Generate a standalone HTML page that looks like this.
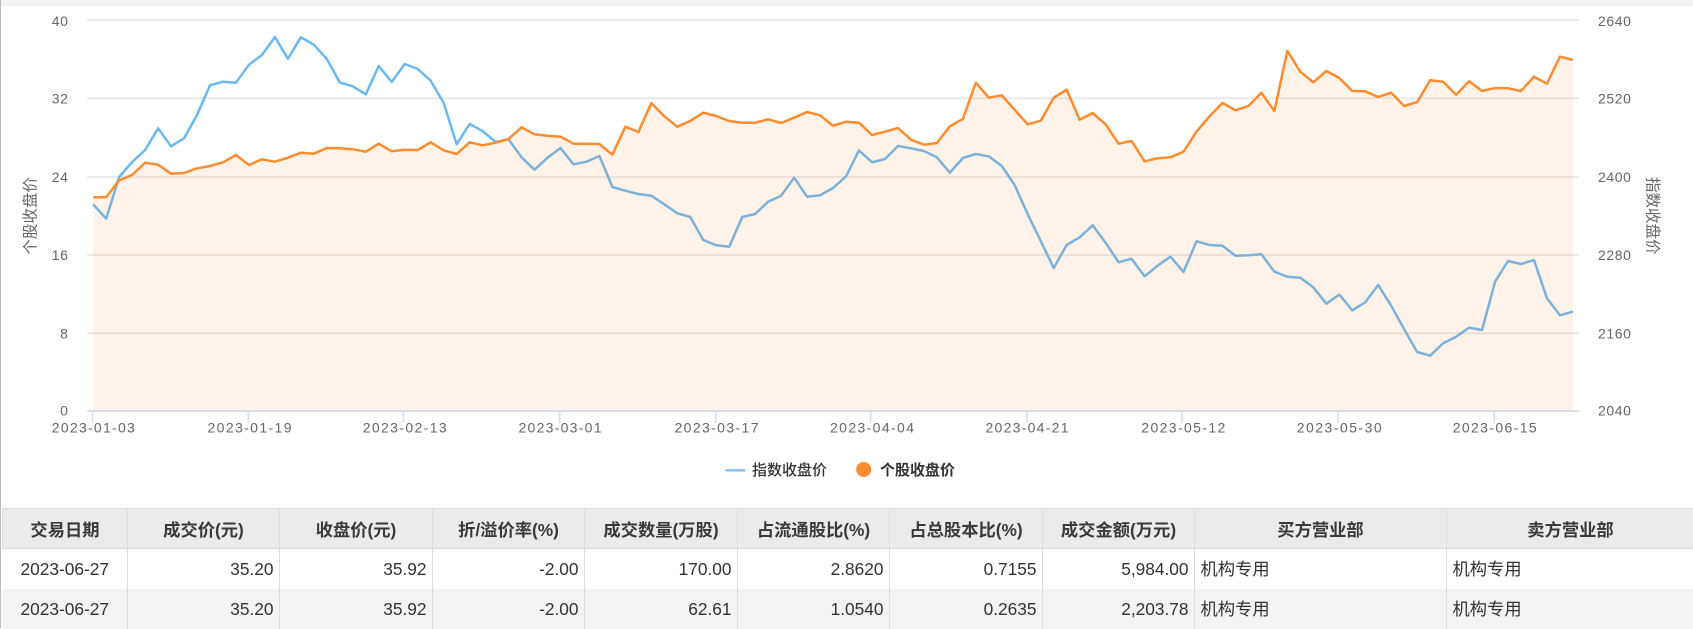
<!DOCTYPE html>
<html lang="zh">
<head>
<meta charset="utf-8">
<title>大宗交易</title>
<style>
html,body{margin:0;padding:0;background:#fff;}
body{position:relative;width:1693px;height:628px;overflow:hidden;font-family:"Liberation Sans","Noto Sans CJK SC",sans-serif;}
#top{position:absolute;left:0;top:0;width:1693px;height:6px;background:#f2f2f2;}
#edge{position:absolute;left:0;top:0;width:1px;height:628px;background:#bcbcbc;}
svg{position:absolute;left:0;top:0;}
svg text{font-family:"Liberation Sans","Noto Sans CJK SC",sans-serif;fill:#666;font-size:14px;}
.yl{letter-spacing:.6px;}
table{position:absolute;left:2px;top:508px;border-collapse:collapse;table-layout:fixed;width:1692px;color:#333;font-size:17.3px;}
th,td{padding:0 5.5px;overflow:hidden;white-space:nowrap;}
th{height:39px;background:#ebebeb;font-weight:bold;text-align:center;color:#3a3a3a;border:1px solid #ddd;}
td{height:40px;text-align:right;border:none;border-left:1px solid #ddd;border-right:1px solid #ddd;}
td.c{text-align:center;border-left:none;}
td.l{text-align:left;}
td.l span{position:relative;top:-1.5px;}
tr.alt td{background:#f3f3f3;}
</style>
</head>
<body>
<div id="top"></div>
<div id="edge"></div>
<svg width="1693" height="500" viewBox="0 0 1693 500">
  <g stroke="#e6e6e6" stroke-width="1.6" fill="none">
    <line x1="87" y1="20" x2="1579" y2="20"/>
    <line x1="87" y1="98.3" x2="1579" y2="98.3"/>
    <line x1="87" y1="177" x2="1579" y2="177"/>
    <line x1="87" y1="255" x2="1579" y2="255"/>
    <line x1="87" y1="333.3" x2="1579" y2="333.3"/>
  </g>
  <g stroke="#d9dfef" stroke-width="1.6" fill="none">
    <line x1="87" y1="411" x2="1579" y2="411" stroke-width="2"/>
    <line x1="92.5" y1="411" x2="92.5" y2="423"/>
    <line x1="248.3" y1="411" x2="248.3" y2="423"/>
    <line x1="403.5" y1="411" x2="403.5" y2="423"/>
    <line x1="559.7" y1="411" x2="559.7" y2="423"/>
    <line x1="715.7" y1="411" x2="715.7" y2="423"/>
    <line x1="870.7" y1="411" x2="870.7" y2="423"/>
    <line x1="1027" y1="411" x2="1027" y2="423"/>
    <line x1="1182" y1="411" x2="1182" y2="423"/>
    <line x1="1338" y1="411" x2="1338" y2="423"/>
    <line x1="1494.3" y1="411" x2="1494.3" y2="423"/>
  </g>
  <g transform="translate(93.2 0) scale(12.98 1)">
    <polyline fill="none" stroke="#6cb8f0" stroke-width="2.5" vector-effect="non-scaling-stroke" stroke-linejoin="round" points="0,204.3 1,218.7 2,177 3,162 4,150 5,128.3 6,146.3 7,138.3 8,115 9,85.3 10,81.7 11,82.7 12,64.7 13,55 14,37 15,58.7 16,37.3 17,44.7 18,59 19,82.5 20,86.3 21,94.3 22,66 23,82 24,64 25,69 26,80.7 27,102.7 28,144.3 29,124 30,131 31,142 32,139.3 33,157.3 34,169.7 35,157.7 36,148 37,164.3 38,161.7 39,156 40,187 41,190.7 42,194 43,195.7 44,204.3 45,213.3 46,217 47,240 48,245.3 49,246.7 50,217 51,214 52,201.7 53,195.7 54,177.7 55,196.7 56,195.3 57,188 58,176.3 59,150.3 60,162.3 61,159 62,146 63,148.3 64,151 65,157.3 66,172.7 67,158 68,154 69,156.3 70,166 71,185.3 72,214.3 73,241 74,268 75,245 76,237.3 77,225.3 78,242.7 79,262.3 80,258.7 81,276.3 82,265.7 83,256.7 84,272 85,241.3 86,245 87,245.7 88,255.7 89,255.3 90,254.3 91,271.7 92,276.7 93,277.7 94,287.3 95,303.7 96,294.5 97,310.3 98,302.3 99,285 100,305.7 101,329.3 102,352 103,355.7 104,343.3 105,336.7 106,327.7 107,330 108,281.7 109,261 110,264 111,260 112,298.3 113,315.3 114,311.7"/>
    <polygon fill="#ff8c2e" fill-opacity=".11" stroke="none" points="0,410 0,197.3 1,197.3 2,180.3 3,175 4,162.7 5,164.7 6,173.7 7,173 8,168.3 9,166 10,162.3 11,155 12,165 13,159.3 14,161.7 15,157.7 16,152.7 17,153.7 18,148 19,148.3 20,149.3 21,151.7 22,143.7 23,151.3 24,149.7 25,150 26,142.3 27,150.3 28,154 29,142.3 30,145.3 31,142.7 32,139 33,127.3 34,134.3 35,135.7 36,136.7 37,143.7 38,143.7 39,144 40,154.7 41,126.7 42,132 43,103 44,116.3 45,126.7 46,121 47,112.7 48,116 49,121 50,122.7 51,122.7 52,119.3 53,123 54,117.7 55,112 56,115.3 57,125.7 58,121.7 59,122.7 60,135 61,131.7 62,128 63,139.7 64,144.7 65,143 66,126.3 67,119 68,82.7 69,97.7 70,95.3 71,110 72,124.3 73,120.7 74,97.7 75,89.7 76,119.7 77,113 78,124.3 79,143.7 80,141 81,161.3 82,158.3 83,157.3 84,151.7 85,131.7 86,116.3 87,103 88,110.3 89,106 90,92.7 91,111 92,51 93,71.7 94,82.3 95,71 96,78 97,91 98,91.3 99,97 100,92.7 101,106 102,102 103,80.3 104,81.7 105,94.7 106,81.3 107,91 108,88 109,88.3 110,91 111,76.7 112,83.7 113,56.7 114,60 114,410"/>
    <polyline fill="none" stroke="#ff8c2e" stroke-width="2.5" vector-effect="non-scaling-stroke" stroke-linejoin="round" points="0,197.3 1,197.3 2,180.3 3,175 4,162.7 5,164.7 6,173.7 7,173 8,168.3 9,166 10,162.3 11,155 12,165 13,159.3 14,161.7 15,157.7 16,152.7 17,153.7 18,148 19,148.3 20,149.3 21,151.7 22,143.7 23,151.3 24,149.7 25,150 26,142.3 27,150.3 28,154 29,142.3 30,145.3 31,142.7 32,139 33,127.3 34,134.3 35,135.7 36,136.7 37,143.7 38,143.7 39,144 40,154.7 41,126.7 42,132 43,103 44,116.3 45,126.7 46,121 47,112.7 48,116 49,121 50,122.7 51,122.7 52,119.3 53,123 54,117.7 55,112 56,115.3 57,125.7 58,121.7 59,122.7 60,135 61,131.7 62,128 63,139.7 64,144.7 65,143 66,126.3 67,119 68,82.7 69,97.7 70,95.3 71,110 72,124.3 73,120.7 74,97.7 75,89.7 76,119.7 77,113 78,124.3 79,143.7 80,141 81,161.3 82,158.3 83,157.3 84,151.7 85,131.7 86,116.3 87,103 88,110.3 89,106 90,92.7 91,111 92,51 93,71.7 94,82.3 95,71 96,78 97,91 98,91.3 99,97 100,92.7 101,106 102,102 103,80.3 104,81.7 105,94.7 106,81.3 107,91 108,88 109,88.3 110,91 111,76.7 112,83.7 113,56.7 114,60"/>
  </g>
  <g text-anchor="end">
    <text class="yl" x="68.5" y="26">40</text>
    <text class="yl" x="68.5" y="103.5">32</text>
    <text class="yl" x="68.5" y="182">24</text>
    <text class="yl" x="68.5" y="260">16</text>
    <text class="yl" x="68.5" y="338.5">8</text>
    <text class="yl" x="68.5" y="415.5">0</text>
  </g>
  <g>
    <text class="yl" x="1598" y="26">2640</text>
    <text class="yl" x="1598" y="103.5">2520</text>
    <text class="yl" x="1598" y="182">2400</text>
    <text class="yl" x="1598" y="260">2280</text>
    <text class="yl" x="1598" y="338.5">2160</text>
    <text class="yl" x="1598" y="415.5">2040</text>
  </g>
  <g>
    <text x="51.8" y="432.7" textLength="83" lengthAdjust="spacing">2023-01-03</text>
    <text x="207.5" y="432.7" textLength="84" lengthAdjust="spacing">2023-01-19</text>
    <text x="362.7" y="432.7" textLength="84" lengthAdjust="spacing">2023-02-13</text>
    <text x="518.5" y="432.7" textLength="83" lengthAdjust="spacing">2023-03-01</text>
    <text x="674.5" y="432.7" textLength="84" lengthAdjust="spacing">2023-03-17</text>
    <text x="830" y="432.7" textLength="84" lengthAdjust="spacing">2023-04-04</text>
    <text x="985.5" y="432.7" textLength="83" lengthAdjust="spacing">2023-04-21</text>
    <text x="1141.3" y="432.7" textLength="84" lengthAdjust="spacing">2023-05-12</text>
    <text x="1296.7" y="432.7" textLength="85" lengthAdjust="spacing">2023-05-30</text>
    <text x="1452.7" y="432.7" textLength="84" lengthAdjust="spacing">2023-06-15</text>
  </g>
  <text transform="translate(35.5 254.5) rotate(-90)" style="font-size:15.5px">个股收盘价</text>
  <text transform="translate(1647.5 177) rotate(90)" style="font-size:15.5px">指数收盘价</text>
  <line x1="725.5" y1="470.3" x2="745" y2="470.3" stroke="#7cc0f5" stroke-width="2.4"/>
  <text x="752" y="475" style="font-size:15px;fill:#333;font-weight:500">指数收盘价</text>
  <circle cx="863.7" cy="469.5" r="7.5" fill="#ff8c2e"/>
  <text x="880" y="475" style="font-size:15px;fill:#333;font-weight:bold">个股收盘价</text>
</svg>
<table>
  <colgroup>
    <col style="width:125px"><col style="width:152px"><col style="width:153px"><col style="width:152px"><col style="width:153px"><col style="width:152px"><col style="width:153px"><col style="width:152px"><col style="width:252px"><col style="width:248px">
  </colgroup>
  <tr><th>交易日期</th><th>成交价(元)</th><th>收盘价(元)</th><th>折/溢价率(%)</th><th>成交数量(万股)</th><th>占流通股比(%)</th><th>占总股本比(%)</th><th>成交金额(万元)</th><th>买方营业部</th><th>卖方营业部</th></tr>
  <tr><td class="c">2023-06-27</td><td>35.20</td><td>35.92</td><td>-2.00</td><td>170.00</td><td>2.8620</td><td>0.7155</td><td>5,984.00</td><td class="l"><span>机构专用</span></td><td class="l"><span>机构专用</span></td></tr>
  <tr class="alt"><td class="c">2023-06-27</td><td>35.20</td><td>35.92</td><td>-2.00</td><td>62.61</td><td>1.0540</td><td>0.2635</td><td>2,203.78</td><td class="l"><span>机构专用</span></td><td class="l"><span>机构专用</span></td></tr>
</table>
</body>
</html>
